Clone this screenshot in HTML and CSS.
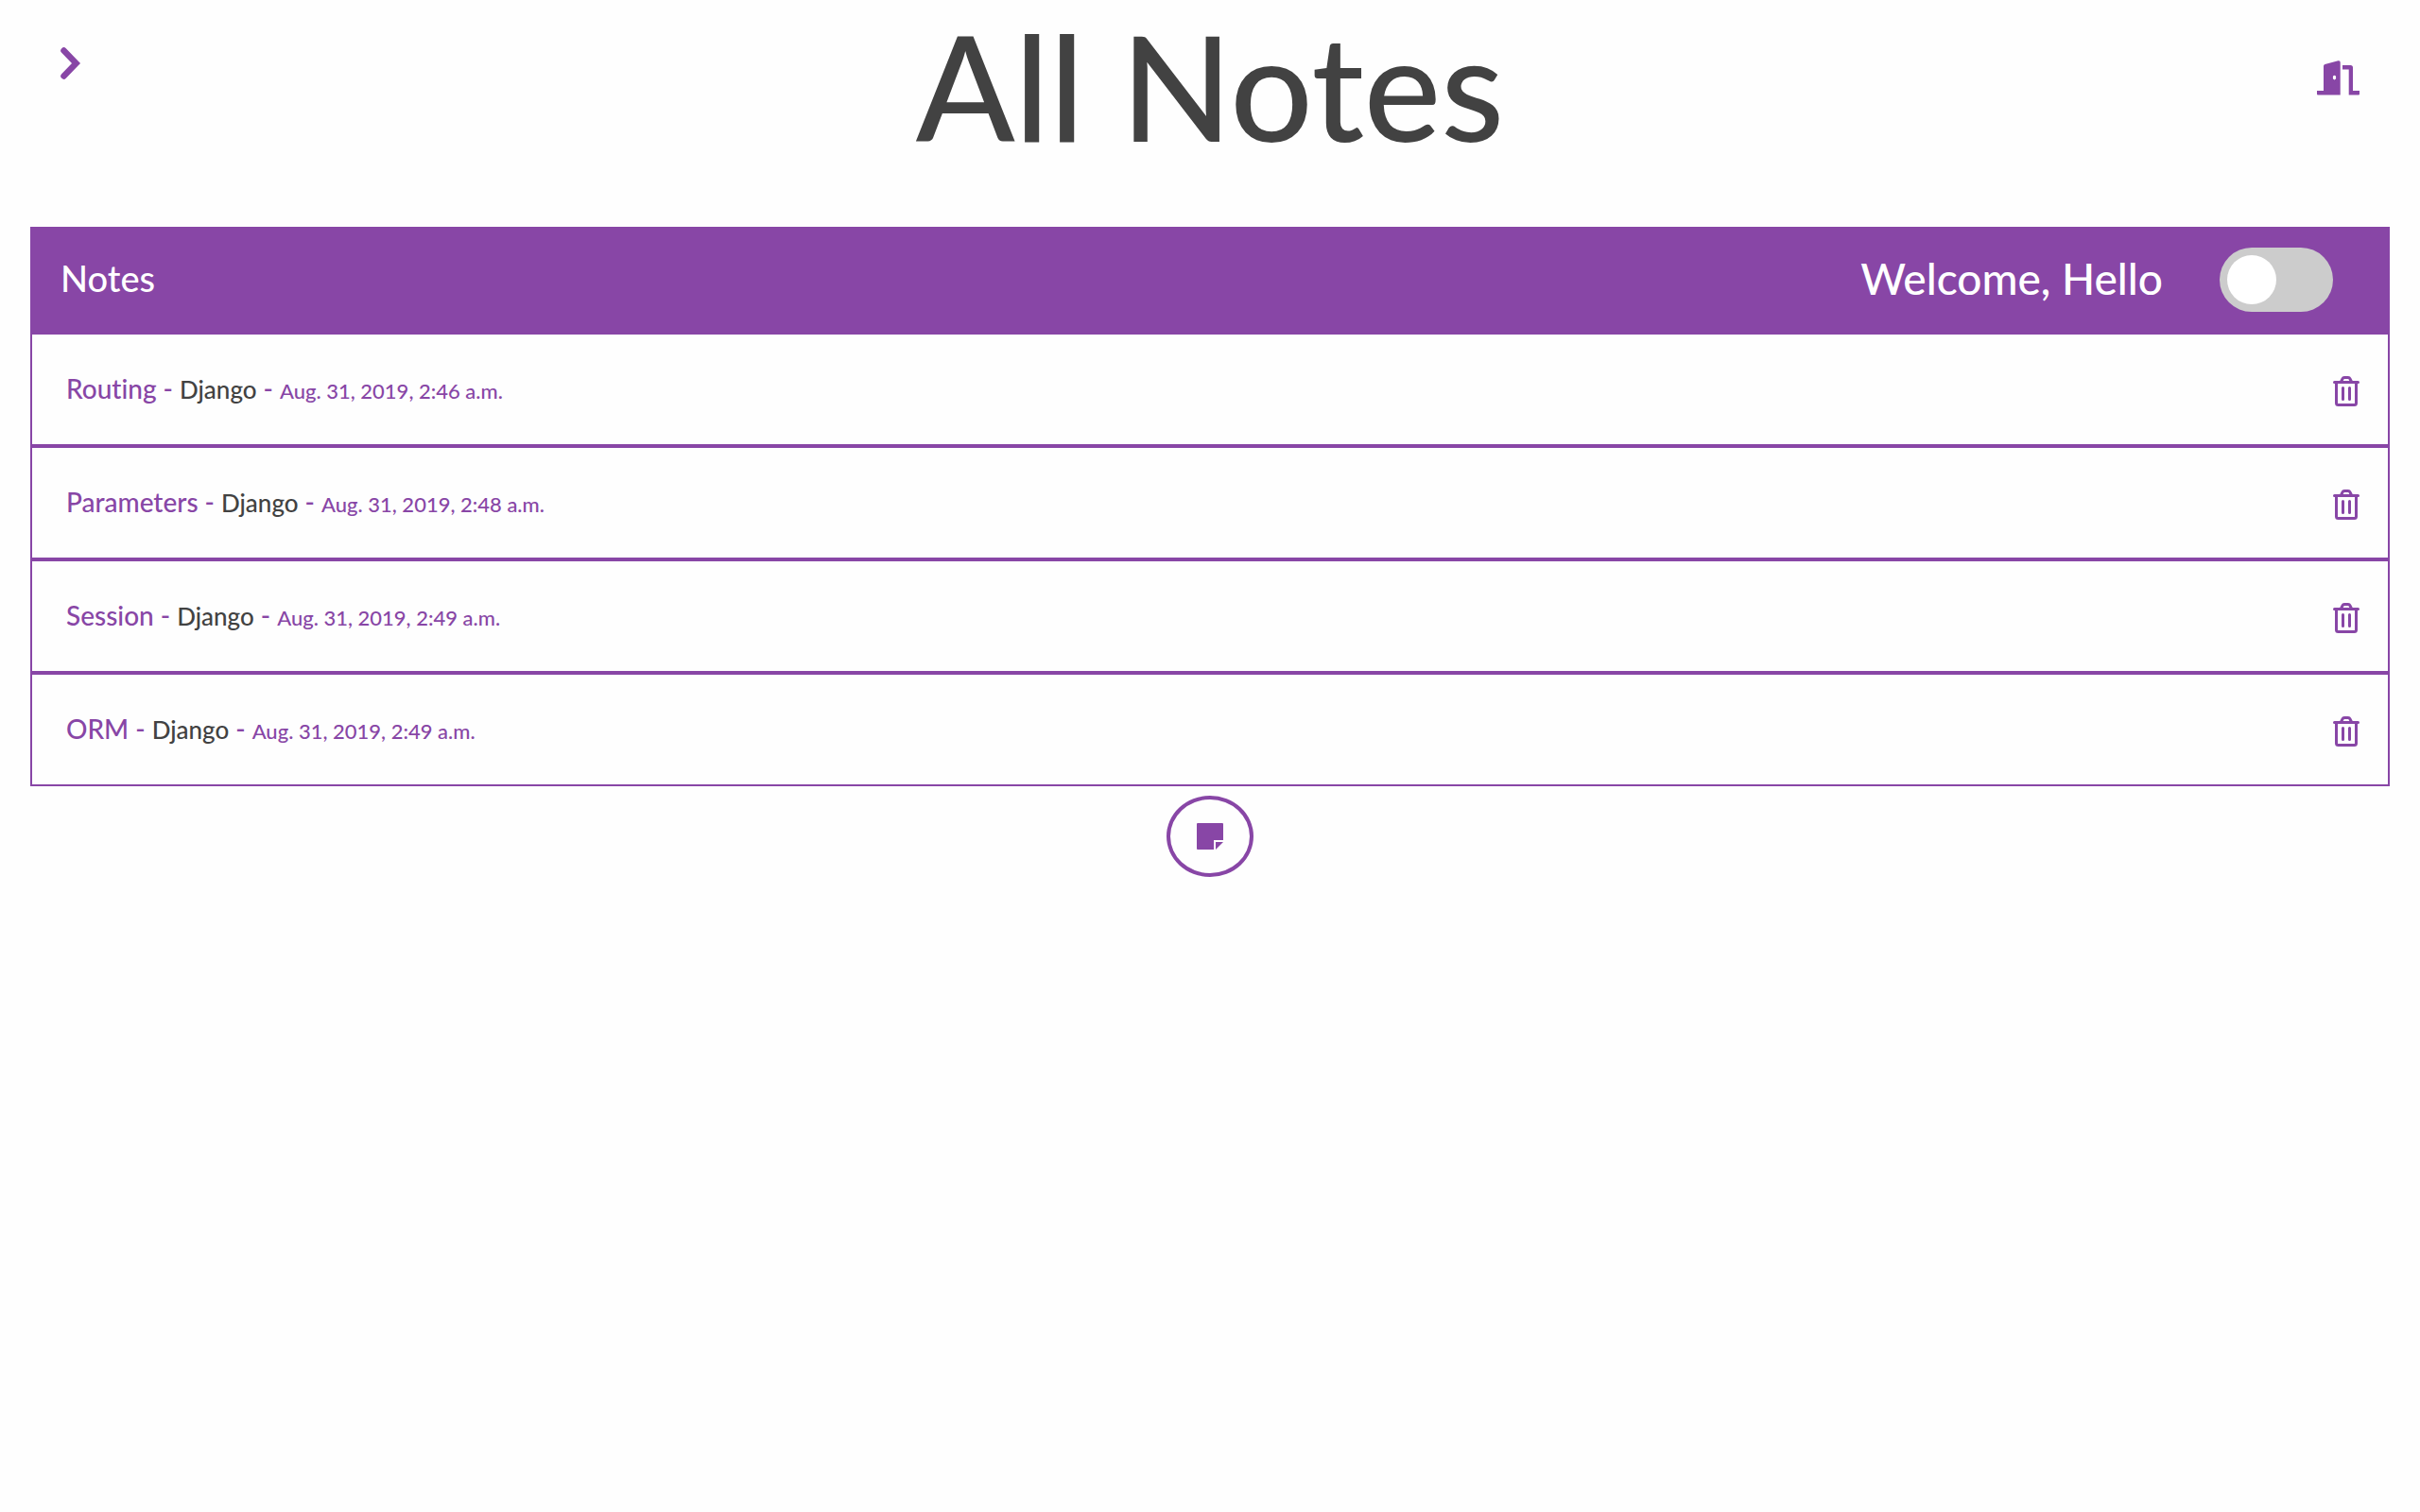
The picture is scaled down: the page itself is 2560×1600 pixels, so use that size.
FILE: index.html
```html
<!DOCTYPE html>
<html lang="en">
<head>
<meta charset="utf-8">
<meta name="viewport" content="width=device-width, initial-scale=1">
<title>All Notes</title>
<link rel="stylesheet" href="styles.css">
</head>
<body>
<svg class="sprite" aria-hidden="true">
  <symbol id="trash" viewBox="0 0 28 32">
    <path d="M1.500 6.500H26.500M3.500 7V28.500Q3.500 30.500 5.500 30.500H22.500Q24.500 30.500 24.500 28.500V7M8.500 6L10 2.800Q10.600 1.500 12 1.500H16Q17.400 1.500 18 2.800L19.500 6M10.500 12.500V24.500M17.500 12.500V24.500" fill="none" stroke="currentColor" stroke-width="3" stroke-linecap="round"/>
  </symbol>
</svg>
<header class="topbar">
  <button class="icon-button menu-button" type="button" aria-label="Open menu">
    <svg width="22" height="34" viewBox="0 0 22 34"><path d="M3.500 3.500L16.500 17L3.500 30.500" fill="none" stroke="currentColor" stroke-width="6.500" stroke-linecap="round"/></svg>
  </button>
  <h1 class="page-title">All Notes</h1>
  <a class="logout" href="#" aria-label="Log out">
    <svg width="45" height="37" viewBox="0 0 45 37" fill="currentColor"><path fill-rule="evenodd" d="M7 6Q7 4.500 8.500 4L22.500 .2Q24.700 -.2 24.700 2V36.500H1Q0 36.500 0 35.500V32H7ZM18.500 15.700A1.700 2.400 0 1 0 18.500 20.500A1.700 2.400 0 1 0 18.500 15.700Z"/><path d="M27 5H35.500Q38 5 38 7.500V32H45V35.500Q45 36.500 44 36.500H33.700V9.500H27Z"/></svg>
  </a>
</header>
<main class="content">
  <section class="panel">
    <div class="panel-head">
      <h2 class="panel-title">Notes</h2>
      <p class="welcome">Welcome, Hello</p>
      <input class="switch" type="checkbox" role="switch" aria-label="Dark mode">
    </div>
    <ul class="notes">
      <li class="note"><p class="note-text"><a class="note-title" href="#">Routing</a><span>-</span><span class="topic">Django</span><span>-</span><time class="date">Aug. 31, 2019, 2:46 a.m.</time></p><button class="icon-button" type="button" aria-label="Delete Routing"><svg width="28" height="32"><use href="#trash"/></svg></button></li>
      <li class="note"><p class="note-text"><a class="note-title" href="#">Parameters</a><span>-</span><span class="topic">Django</span><span>-</span><time class="date">Aug. 31, 2019, 2:48 a.m.</time></p><button class="icon-button" type="button" aria-label="Delete Parameters"><svg width="28" height="32"><use href="#trash"/></svg></button></li>
      <li class="note"><p class="note-text"><a class="note-title" href="#">Session</a><span>-</span><span class="topic">Django</span><span>-</span><time class="date">Aug. 31, 2019, 2:49 a.m.</time></p><button class="icon-button" type="button" aria-label="Delete Session"><svg width="28" height="32"><use href="#trash"/></svg></button></li>
      <li class="note"><p class="note-text"><a class="note-title" href="#">ORM</a><span>-</span><span class="topic">Django</span><span>-</span><time class="date">Aug. 31, 2019, 2:49 a.m.</time></p><button class="icon-button" type="button" aria-label="Delete ORM"><svg width="28" height="32"><use href="#trash"/></svg></button></li>
    </ul>
  </section>
  <button class="add-note" type="button" aria-label="Add note">
    <svg width="28" height="28" viewBox="0 0 28 28" fill="currentColor"><path d="M1 0H27Q28 0 28 1V18H18V28H1Q0 28 0 27V1Q0 0 1 0ZM20 20H28L20 28Z"/></svg>
  </button>
</main>
</body>
</html>
```
FILE: styles.css
```css
:root {
  --purple: #8846a6;
  --ink: #424242;
}

* {
  box-sizing: border-box;
}

body {
  margin: 0;
  background: #fefefe;
  color: var(--purple);
  font-family: "Gill Sans", Lato, "Liberation Sans", sans-serif;
  font-weight: 500;
  font-variant-ligatures: none;
}

h1,
h2,
p,
ul {
  margin: 0;
  padding: 0;
}

svg {
  display: block;
}

.sprite {
  display: none;
}

.icon-button {
  padding: 0;
  border: 0;
  background: none;
  color: inherit;
  cursor: pointer;
}

.topbar {
  display: grid;
  grid-template-columns: 1fr auto 1fr;
  align-items: start;
  min-height: 240px;
  padding: 0 64px;
}

.menu-button {
  justify-self: start;
  margin-top: 50px;
}

.page-title {
  color: var(--ink);
  font-size: 154px;
  font-weight: 500;
  line-height: 182px;
}

.logout {
  justify-self: end;
  margin-top: 64px;
  color: inherit;
}

.content {
  padding: 0 32px;
}

.panel-head {
  display: flex;
  align-items: center;
  height: 112px;
  padding: 0 60px 0 32px;
  background: var(--purple);
  color: #fff;
}

.panel-title {
  flex: 1;
  padding-bottom: 4px;
  font-size: 38px;
  font-weight: 500;
}

.welcome {
  margin-right: 60px;
  padding-bottom: 4px;
  font-size: 46px;
}

.switch {
  appearance: none;
  width: 120px;
  height: 68px;
  margin: 0;
  padding: 8px;
  border-radius: 34px;
  background: #ccc;
  cursor: pointer;
}

.switch::before {
  content: "";
  display: block;
  width: 52px;
  height: 52px;
  border-radius: 50%;
  background: #fff;
}

.switch:checked::before {
  margin-left: auto;
}

.notes {
  list-style: none;
}

.note {
  display: flex;
  align-items: center;
  justify-content: space-between;
  height: 120px;
  padding: 4px 30px 0 36px;
  border: 2px solid var(--purple);
}

.note-text {
  display: flex;
  align-items: baseline;
  gap: 7px;
  padding-bottom: 6px;
  font-size: 28px;
}

.note-title {
  color: inherit;
  text-decoration: none;
}

.topic {
  color: var(--ink);
  font-size: 26px;
}

.date {
  font-size: 22px;
}

.add-note {
  display: grid;
  place-items: center;
  width: 92px;
  height: 86px;
  margin: 10px auto;
  padding: 0;
  border: 4px solid var(--purple);
  border-radius: 50%;
  background: none;
  color: inherit;
  cursor: pointer;
}
```
